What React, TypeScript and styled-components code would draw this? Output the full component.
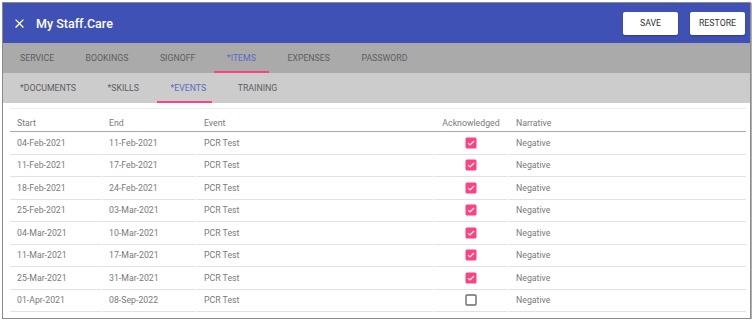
import React from "react";
import styled, { createGlobalStyle } from "styled-components";

const GlobalStyle = createGlobalStyle`
  html, body {
    margin: 0;
    padding: 0;
    background: #ffffff;
    font-family: Roboto, "Liberation Sans", Arial, sans-serif;
  }
`;

interface EventRow {
  start: string;
  end: string;
  event: string;
  acknowledged: boolean;
  narrative: string;
}

const rows: Array<EventRow> = [
  { start: "04-Feb-2021", end: "11-Feb-2021", event: "PCR Test", acknowledged: true, narrative: "Negative" },
  { start: "11-Feb-2021", end: "17-Feb-2021", event: "PCR Test", acknowledged: true, narrative: "Negative" },
  { start: "18-Feb-2021", end: "24-Feb-2021", event: "PCR Test", acknowledged: true, narrative: "Negative" },
  { start: "25-Feb-2021", end: "03-Mar-2021", event: "PCR Test", acknowledged: true, narrative: "Negative" },
  { start: "04-Mar-2021", end: "10-Mar-2021", event: "PCR Test", acknowledged: true, narrative: "Negative" },
  { start: "11-Mar-2021", end: "17-Mar-2021", event: "PCR Test", acknowledged: true, narrative: "Negative" },
  { start: "25-Mar-2021", end: "31-Mar-2021", event: "PCR Test", acknowledged: true, narrative: "Negative" },
  { start: "01-Apr-2021", end: "08-Sep-2022", event: "PCR Test", acknowledged: false, narrative: "Negative" },
];

const mainTabs = ["SERVICE", "BOOKINGS", "SIGNOFF", "*ITEMS", "EXPENSES", "PASSWORD"];
const subTabs = ["*DOCUMENTS", "*SKILLS", "*EVENTS", "TRAINING"];

const Page = styled.div`
  padding: 2px 0 0 2px;
`;

const Panel = styled.div`
  box-sizing: border-box;
  width: 749px;
  height: 317px;
  border: 1px solid #8a8a8a;
  box-shadow: 1px 1px 0 #b0b0b0;
  display: flex;
  flex-direction: column;
  overflow: hidden;
`;

const Toolbar = styled.div`
  height: 40px;
  flex: none;
  background: #3f51b5;
  display: flex;
  align-items: center;
  padding: 0 5px 0 9px;
`;

const CloseButton = styled.div`
  width: 15px;
  height: 15px;
  display: flex;
  color: #ffffff;
`;

const Title = styled.div`
  margin-left: 9px;
  color: #ffffff;
  font-size: 12.5px;
  font-weight: 500;
  flex: 1;
`;

const ToolButton = styled.div`
  box-sizing: border-box;
  width: 55px;
  height: 23px;
  margin-left: 12px;
  background: #ffffff;
  border-radius: 2px;
  box-shadow: 0 1px 2px rgba(0, 0, 0, 0.25);
  display: flex;
  align-items: center;
  justify-content: center;
  font-size: 8.75px;
  font-weight: 400;
  color: #333333;
`;

const TabBar = styled.div<{ bg: string }>`
  height: 30px;
  flex: none;
  background: ${props => props.bg};
  display: flex;
  gap: 5.5px;
  padding-left: 4px;
`;

const Tab = styled.div<{ active?: boolean }>`
  position: relative;
  padding: 0 13px;
  display: flex;
  align-items: center;
  font-size: 8.75px;
  font-weight: 400;
  color: ${props => (props.active ? "#5c6bc0" : "#5e5e5e")};

  &::after {
    content: "";
    display: ${props => (props.active ? "block" : "none")};
    position: absolute;
    left: 0;
    bottom: 0;
    width: 55px;
    height: 2px;
    background: #ff4081;
  }
`;

const Content = styled.div`
  flex: 1;
  padding: 5px 4px 0 7px;
`;

const Table = styled.div`
  border-top: 1px solid #eeeeee;
`;

const Row = styled.div<{ header?: boolean }>`
  display: grid;
  grid-template-columns: 91px 94px 236px 74px 1fr;
  column-gap: 1px;
  height: ${props => (props.header ? "22px" : "22.5px")};
  ${props => props.header && "border-bottom: 1px solid #a8a8a8;"}
`;

const HeadCell = styled.div<{ center?: boolean }>`
  display: flex;
  align-items: flex-end;
  justify-content: ${props => (props.center ? "center" : "flex-start")};
  padding: 0 7px 3px;
  font-size: 8.75px;
  color: #7a7a7a;
`;

const Cell = styled.div<{ center?: boolean }>`
  display: flex;
  align-items: center;
  justify-content: ${props => (props.center ? "center" : "flex-start")};
  padding: 0 7px;
  font-size: 8.75px;
  color: #7a7a7a;
  border-bottom: 1px solid #e2e2e2;
`;

const CloseIcon = () => (
  <svg width="15" height="15" viewBox="0 0 24 24">
    <path
      fill="currentColor"
      d="M19 6.41L17.59 5 12 10.59 6.41 5 5 6.41 10.59 12 5 17.59 6.41 19 12 13.41 17.59 19 19 17.59 13.41 12z"
    />
  </svg>
);

const CheckBox = (props: { checked: boolean }) =>
  props.checked ? (
    <svg width="12" height="12" viewBox="0 0 12 12">
      <rect x="0.5" y="0.5" width="11" height="11" rx="1.5" fill="#ff4081" />
      <path d="M3 6.2 L5 8 L9 4" fill="none" stroke="#ffffff" strokeWidth="1.1" />
    </svg>
  ) : (
    <svg width="12" height="12" viewBox="0 0 12 12">
      <rect x="1" y="1" width="10" height="10" rx="1" fill="none" stroke="#6b6b6b" strokeWidth="1.4" />
    </svg>
  );

export default function App() {
  return (
    <Page>
      <GlobalStyle />
      <Panel>
        <Toolbar>
          <CloseButton>
            <CloseIcon />
          </CloseButton>
          <Title>My Staff.Care</Title>
          <ToolButton>SAVE</ToolButton>
          <ToolButton>RESTORE</ToolButton>
        </Toolbar>
        <TabBar bg="#aaaaaa">
          {mainTabs.map(t => (
            <Tab key={t} active={t === "*ITEMS"}>{t}</Tab>
          ))}
        </TabBar>
        <TabBar bg="#cccccc">
          {subTabs.map(t => (
            <Tab key={t} active={t === "*EVENTS"}>{t}</Tab>
          ))}
        </TabBar>
        <Content>
          <Table>
            <Row header>
              <HeadCell>Start</HeadCell>
              <HeadCell>End</HeadCell>
              <HeadCell>Event</HeadCell>
              <HeadCell center>Acknowledged</HeadCell>
              <HeadCell>Narrative</HeadCell>
            </Row>
            {rows.map((r, i) => (
              <Row key={i}>
                <Cell>{r.start}</Cell>
                <Cell>{r.end}</Cell>
                <Cell>{r.event}</Cell>
                <Cell center>
                  <CheckBox checked={r.acknowledged} />
                </Cell>
                <Cell>{r.narrative}</Cell>
              </Row>
            ))}
          </Table>
        </Content>
      </Panel>
    </Page>
  );
}
